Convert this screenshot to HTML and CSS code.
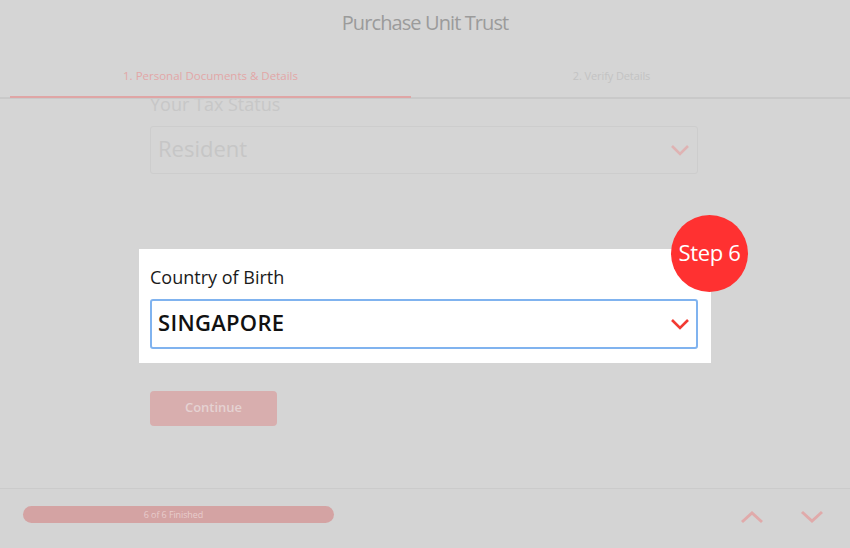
FILE: index.html
```html
<!DOCTYPE html>
<html>
<head>
<meta charset="utf-8">
<link rel="stylesheet" href="styles.css">
</head>
<body>
<div class="app">
  <header class="header">
    <h1 class="title">Purchase Unit Trust</h1>
    <nav class="tabs">
      <div class="tab tab-active">1. Personal Documents &amp; Details</div>
      <div class="tab">2. Verify Details</div>
    </nav>
  </header>
  <main class="main">
    <div class="form">
      <div class="field-label dim">Your Tax Status</div>
      <div class="select dim-select">
        <span class="select-value">Resident</span>
        <svg class="chev" width="20" height="14" viewBox="0 0 20 14"><path d="M2 3 L10 11 L18 3" fill="none" stroke="#dfb3b3" stroke-width="2.6"/></svg>
      </div>
      <section class="spot">
        <div class="field-label">Country of Birth</div>
        <div class="select focus-select">
          <span class="select-value strong">SINGAPORE</span>
          <svg class="chev" width="20" height="14" viewBox="0 0 20 14"><path d="M2 3 L10 11 L18 3" fill="none" stroke="#f23a32" stroke-width="2.6"/></svg>
        </div>
        <div class="badge">Step 6</div>
      </section>
      <button class="continue">Continue</button>
    </div>
  </main>
  <footer class="footer">
    <div class="progress">6 of 6 Finished</div>
    <div class="arrows">
      <svg width="24" height="14" viewBox="0 0 24 14"><path d="M2 12 L12 3 L22 12" fill="none" stroke="#e0aaaa" stroke-width="3"/></svg>
      <svg width="24" height="14" viewBox="0 0 24 14"><path d="M2 2 L12 11 L22 2" fill="none" stroke="#e0aaaa" stroke-width="3"/></svg>
    </div>
  </footer>
</div>
</body>
</html>
```

FILE: styles.css
```css
* { box-sizing: border-box; }
html, body { margin: 0; padding: 0; }
body {
  background: #d5d5d5;
  font-family: "Open Sans", "Noto Sans", sans-serif;
  width: 850px;
  height: 548px;
  overflow: hidden;
}
.app {
  display: flex;
  flex-direction: column;
  height: 548px;
}
.header {
  padding-top: 10px;
  border-bottom: 2px solid #c9c9c9;
  position: relative;
  z-index: 2;
  background: #d5d5d5;
}
.title {
  margin: 0;
  font-size: 20px;
  line-height: 26px;
  font-weight: 400;
  color: #9b9b9b;
  text-align: center;
  letter-spacing: -0.9px;
}
.tabs {
  display: flex;
  padding-left: 10px;
}
.tab {
  width: 401px;
  padding-top: 33px;
  padding-bottom: 13px;
  font-size: 11.5px;
  line-height: 14px;
  color: #c3c3c3;
  text-align: center;
  letter-spacing: 0;
  border-bottom: 2px solid transparent;
  margin-bottom: -1px;
}
.tab + .tab { font-size: 11px; letter-spacing: -0.1px; }
.tab-active {
  color: #e2a7a7;
  border-bottom-color: #dfa5a5;
}
.main {
  flex: 1;
  overflow: hidden;
}
.form {
  width: 548px;
  margin-left: 150px;
  margin-top: -7px;
  display: flex;
  flex-direction: column;
  align-items: flex-start;
}
.field-label {
  font-size: 18px;
  line-height: 24px;
  color: #1a1a1a;
  letter-spacing: 0;
}
.field-label.dim { color: #c7c7c7; }
.select {
  width: 548px;
  height: 48px;
  margin-top: 10px;
  display: flex;
  align-items: center;
  justify-content: space-between;
  padding: 0 7px 0 7px;
  border-radius: 3px;
}
.select-value {
  font-size: 22px;
  line-height: 28px;
  margin-top: -5px;
}
.dim-select {
  border: 1px solid #cdcdcd;
}
.dim-select .select-value {
  color: #c6c6c6;
}
.focus-select {
  border: 2px solid #80b3ef;
  height: 50px;
  padding: 0 6px;
}
.strong {
  font-weight: 600;
  color: #111;
  letter-spacing: 0.3px;
}
.chev { display: block; }
.spot {
  position: relative;
  margin: 75px 0 0 -11px;
  width: 572px;
  padding: 16px 13px 14px 11px;
  background: #ffffff;
}
.badge {
  position: absolute;
  left: 532px;
  top: -34px;
  width: 77px;
  height: 77px;
  padding-bottom: 4px;
  border-radius: 50%;
  background: #ff3131;
  color: #fff;
  font-size: 22px;
  display: flex;
  align-items: center;
  justify-content: center;
  letter-spacing: -0.3px;
}
.continue {
  margin-top: 28px;
  width: 127px;
  height: 35px;
  border: none;
  border-radius: 4px;
  background: #d8aeae;
  color: #e5d2d2;
  font-family: inherit;
  font-size: 13px;
  font-weight: 600;
  padding: 0 0 4px 0;
}
.footer {
  height: 60px;
  border-top: 1px solid #cbcbcb;
  background: #d4d4d4;
  display: flex;
  align-items: flex-start;
  justify-content: space-between;
  padding: 17px 26px 0 23px;
}
.progress {
  width: 311px;
  height: 17px;
  border-radius: 9px;
  background: #d4a3a3;
  color: #e8cccc;
  font-size: 9px;
  line-height: 17px;
  text-align: center;
  letter-spacing: -0.1px;
  padding-right: 10px;
}
.arrows {
  display: flex;
  gap: 36px;
  padding-top: 4px;
}
.arrows svg { display: block; }
```
